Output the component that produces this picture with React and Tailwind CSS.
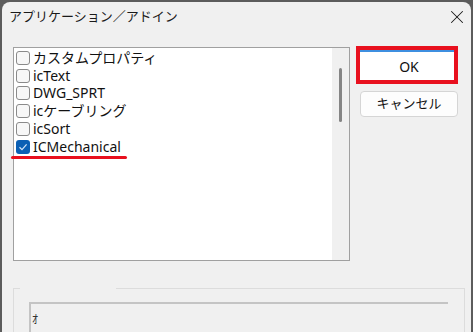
import { X } from "lucide-react";

const items = [
  { label: "カスタムプロパティ", checked: false },
  { label: "icText", checked: false },
  { label: "DWG_SPRT", checked: false },
  { label: "icケーブリング", checked: false },
  { label: "icSort", checked: false },
  { label: "ICMechanical", checked: true },
];

const font = { fontFamily: '"Noto Sans", "Noto Sans CJK JP", sans-serif' };

function Check({ checked }) {
  if (checked) {
    return (
      <span className="flex h-[14px] w-[14px] shrink-0 items-center justify-center rounded-[3px] bg-[#0a5fb4]">
        <svg width="10" height="10" viewBox="0 0 10 10">
          <path d="M1.5 5.2 L4 7.6 L8.6 2.4" fill="none" stroke="#cfe3f7" strokeWidth="1.3" />
        </svg>
      </span>
    );
  }
  return <span className="h-[14px] w-[14px] shrink-0 rounded-[3px] border border-[#8a8a8a] bg-[#f7f7f7]" />;
}

export default function App() {
  return (
    <div className="h-[332px] w-[473px] overflow-hidden bg-[#5c5c5c] pl-[2px] pr-[2px] pt-[2px]" style={font}>
      <div className="h-full rounded-t-[8px] bg-[#f0f0f0]">
        {/* title bar */}
        <div className="flex h-[30px] items-center justify-between pl-[7px] pr-[3px]">
          <span className="text-[13px] text-[#1a1a1a]">アプリケーション／アドイン</span>
          <X size={22} strokeWidth={1.1} className="text-[#1a1a1a]" />
        </div>

        <div className="flex pl-[11px] pt-[14px]">
          {/* list */}
          <div className="mt-[1px] flex h-[214px] w-[337px] border border-[#a0a0a0] bg-white">
            <div className="relative flex-1 pl-[2px] pt-[1px]">
              {items.map((it) => (
                <div key={it.label} className="flex h-[17.8px] items-center gap-[3px] text-[14px] leading-none text-[#111]">
                  <Check checked={it.checked} />
                  <span>{it.label}</span>
                </div>
              ))}
              <div className="absolute left-[-3px] top-[108px] h-[3px] w-[116px] rounded-full bg-[#e8101e]" />
            </div>
            <div className="flex w-[17px] justify-center bg-[#f0f0f0] pt-[20px]">
              <div className="h-[54px] w-[3px] rounded-full bg-[#858585]" />
            </div>
          </div>

          {/* buttons */}
          <div className="ml-[10px] flex flex-col pt-[4px]">
            <div className="relative">
              <button className="h-[30px] w-[98px] border-t-2 border-[#3d8fe0] bg-white text-[14px] font-normal text-[#111]">OK</button>
              <div className="absolute left-[-4px] top-[-4px] h-[38px] w-[102px] border-4 border-[#e8101e]" />
            </div>
            <button className="mt-[11px] h-[26px] w-[98px] rounded-[4px] border border-[#d5d5d5] bg-[#fdfdfd] text-[13px] text-[#111]">
              キャンセル
            </button>
          </div>
        </div>

        {/* group box */}
        <div className="relative ml-[11px] mt-[27px] h-[60px] w-[452px] border border-[#dcdcdc] pl-[15px] pt-[13px]">
          <div className="absolute left-[6px] top-[-1px] h-[2px] w-[96px] bg-[#f0f0f0]" />
          <div className="h-[40px] w-[419px] border-l-2 border-t-2 border-[#c4c4c4] pl-[1px] pt-[2px]">
            <span className="text-[12px] leading-none text-[#333]">ｵ</span>
          </div>
        </div>
      </div>
    </div>
  );
}
